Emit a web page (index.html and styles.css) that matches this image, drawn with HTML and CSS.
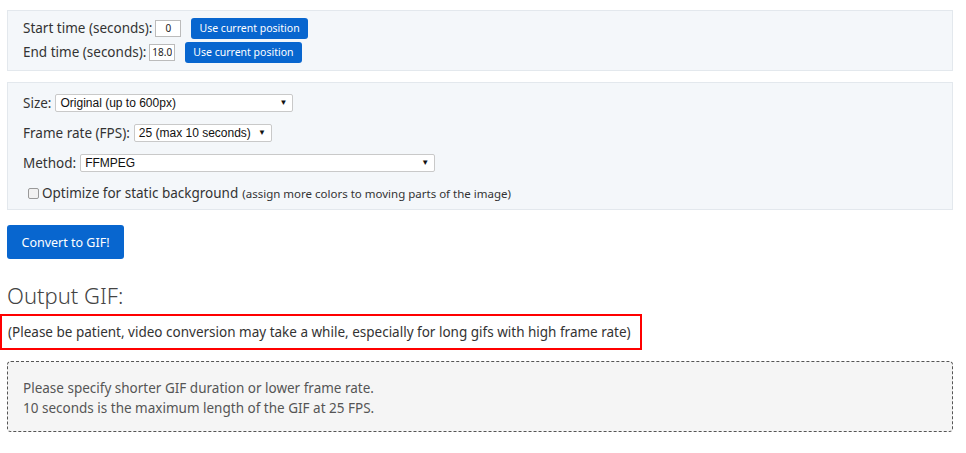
FILE: index.html
```html
<!DOCTYPE html>
<html>
<head>
<meta charset="utf-8">
<link rel="stylesheet" href="styles.css">
</head>
<body>
<div class="page">
  <div class="panel panel-time">
    <div class="row">
      <span class="label">Start time (seconds):</span>
      <input class="num" type="text" value="0">
      <button class="btn-small">Use current position</button>
    </div>
    <div class="row">
      <span class="label">End time (seconds):</span>
      <input class="num num-end" type="text" value="18.0">
      <button class="btn-small">Use current position</button>
    </div>
  </div>

  <div class="panel panel-opts">
    <div class="row row-opt">
      <span class="label">Size:</span>
      <span class="sel sel-size"><span class="sel-text">Original (up to 600px)</span><span class="arrow">▼</span></span>
    </div>
    <div class="row row-opt">
      <span class="label">Frame rate (FPS):</span>
      <span class="sel sel-fps"><span class="sel-text">25 (max 10 seconds)</span><span class="arrow">▼</span></span>
    </div>
    <div class="row row-opt">
      <span class="label">Method:</span>
      <span class="sel sel-method"><span class="sel-text">FFMPEG</span><span class="arrow">▼</span></span>
    </div>
    <div class="row row-opt row-check">
      <span class="check"></span>
      <span class="label label-big">Optimize for static background</span>
      <span class="hint">(assign more colors to moving parts of the image)</span>
    </div>
  </div>

  <button class="btn-convert">Convert to GIF!</button>

  <h2 class="output-title">Output GIF:</h2>
  <div class="patience">(Please be patient, video conversion may take a while, especially for long gifs with high frame rate)</div>

  <div class="notice">
    <div>Please specify shorter GIF duration or lower frame rate.</div>
    <div>10 seconds is the maximum length of the GIF at 25 FPS.</div>
  </div>
</div>
</body>
</html>
```

FILE: styles.css
```css
html, body {
  margin: 0;
  padding: 0;
  background: #fff;
}
body {
  font-family: "Noto Sans", "Open Sans", sans-serif;
  color: #333;
  font-size: 13.5px;
}
.page {
  padding: 10px 13px 0 7px;
}
.panel {
  background: #f4f7fa;
  border: 1px solid #e3e8ed;
  padding: 4px 15px 7px 15px;
}
.panel-time {
  padding-top: 5px;
  padding-bottom: 6px;
}
.panel-opts {
  margin-top: 11px;
  padding-top: 5px;
  padding-bottom: 1px;
}
.row {
  display: flex;
  align-items: center;
  height: 24px;
  white-space: nowrap;
}
.row-opt {
  height: 30px;
}
.label {
  font-size: 13.5px;
  color: #333;
}
.num {
  box-sizing: border-box;
  width: 26px;
  height: 17px;
  margin-left: 3px;
  border: 1px solid #bbb;
  background: #fff;
  font-family: "Noto Sans", sans-serif;
  font-size: 10px;
  text-align: center;
  padding: 0 2px;
  color: #222;
}
.num-end {
  text-align: left;
  width: 26px;
  overflow: hidden;
}
.btn-small {
  margin-left: 10px;
  height: 21px;
  padding: 0 8px;
  background: #0866cf;
  color: #fff;
  border: 0;
  border-radius: 3px;
  font-family: "Noto Sans", sans-serif;
  font-size: 10.5px;
}
.sel {
  position: relative;
  box-sizing: border-box;
  display: inline-flex;
  align-items: center;
  height: 18px;
  margin-left: 4px;
  border: 1px solid #c9c9c9;
  border-radius: 2px;
  background: #fff;
  padding-left: 4px;
  font-family: "Liberation Sans", sans-serif;
  font-size: 12px;
  color: #111;
}
.sel-size { width: 238px; }
.sel-fps { width: 138px; }
.sel-method { width: 355px; }
.arrow {
  position: absolute;
  right: 5px;
  top: 1px;
  font-size: 8px;
  line-height: 14px;
  color: #111;
}
.row-check {
  padding-left: 5px;
}
.check {
  box-sizing: border-box;
  width: 11px;
  height: 11px;
  border: 1px solid #999;
  border-radius: 2px;
  background: #f1f1f1;
  margin-right: 3px;
}
.label-big {
  font-size: 13.5px;
}
.hint {
  font-size: 11.5px;
  margin-left: 4px;
  color: #333;
}
.btn-convert {
  display: block;
  margin-top: 15px;
  width: 117px;
  height: 34px;
  background: #0866cf;
  color: #fff;
  border: 0;
  border-radius: 3px;
  font-family: "Noto Sans", sans-serif;
  font-size: 12.5px;
  padding: 0;
}
.output-title {
  margin: 20px 0 0 0;
  font-weight: 300;
  font-size: 22px;
  line-height: 32px;
  color: #444;
}
.patience {
  display: inline-block;
  margin: 3px 0 0 -7px;
  border: 2px solid #f00;
  padding: 6px 9px 6px 6px;
  font-size: 13.5px;
  line-height: 20px;
  color: #333;
}
.notice {
  margin-top: 11px;
  background: #f5f5f5;
  border: 1px dashed #555;
  border-radius: 4px;
  padding: 16px 15px 13px 15px;
  font-size: 13.5px;
  line-height: 20px;
  color: #555;
}
```
